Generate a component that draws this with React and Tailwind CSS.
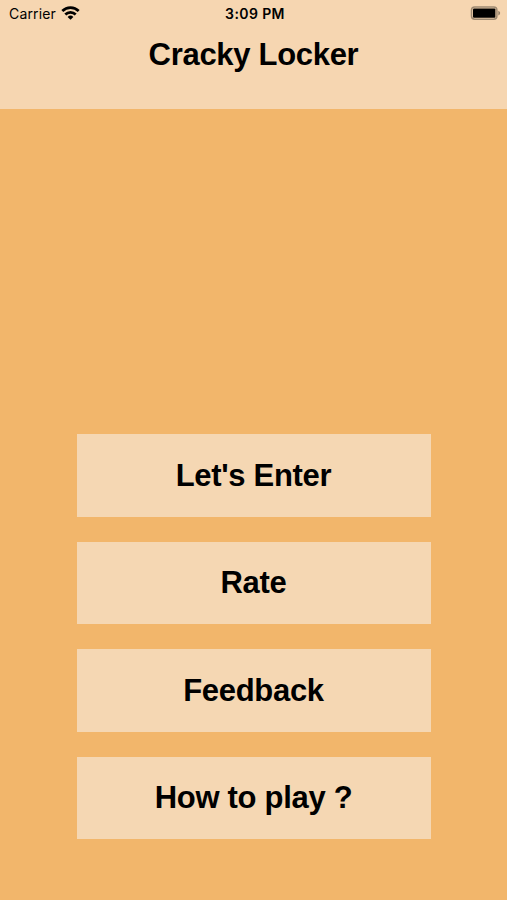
import React from 'react';

const menuItems = [
  { id: 'enter', label: "Let's Enter" },
  { id: 'rate', label: 'Rate' },
  { id: 'feedback', label: 'Feedback' },
  { id: 'help', label: 'How to play ?' }
];

const WifiIcon = () => (
  <svg className="w-[19px] h-[14px] -mt-px" viewBox="0 0 19 14" fill="none" stroke="#000" strokeWidth="2.7">
    <path d="M1.3 5a11.6 11.6 0 0 1 16.4 0" />
    <path d="M4.3 8.5a7.4 7.4 0 0 1 10.4 0" />
    <path d="M9.5 13.8 6.6 10.9a4.1 4.1 0 0 1 5.8 0z" fill="#000" stroke="none" />
  </svg>
);

const BatteryIcon = () => (
  <svg className="w-[31px] h-[14px] -mt-px" viewBox="0 0 31 14" fill="none">
    <rect x="1.5" y="1" width="25.4" height="12.2" rx="3.2" stroke="#000" strokeOpacity="0.36" strokeWidth="1.5" />
    <rect x="3" y="2.4" width="22.4" height="9.4" rx="1" fill="#000" />
    <path d="M28.3 4.8v4.6c2.4-.8 2.4-3.8 0-4.6z" fill="#000" fillOpacity="0.4" />
  </svg>
);

const StatusBar = () => (
  <div className="grid grid-cols-3 items-center h-[27px] pl-[9px] pr-[6px] text-[14px]">
    <div className="flex items-center gap-[5px]">
      <span className="tracking-[0.15px]">Carrier</span>
      <WifiIcon />
    </div>
    <span className="text-center font-semibold tracking-[0.4px]">3:09 PM</span>
    <div className="flex justify-end">
      <BatteryIcon />
    </div>
  </div>
);

const App = () => {
  return (
    <div className="flex flex-col h-screen bg-[#f2b66b] text-black font-['Inter',sans-serif]">
      <header className="h-[109px] bg-[#f6d6b1]">
        <StatusBar />
        <h1 className="mt-[8px] text-center text-[31px] leading-[40px] font-bold tracking-[-0.3px] font-['Liberation_Sans',sans-serif]">
          Cracky Locker
        </h1>
      </header>

      <nav className="mt-[325px] mx-auto w-[354px] flex flex-col gap-[25px]">
        {menuItems.map((item) => (
          <button
            key={item.id}
            className="h-[82.5px] pt-px bg-[#f5d7b3] text-[31px] font-bold tracking-[-0.3px] font-['Liberation_Sans',sans-serif]"
          >
            {item.label}
          </button>
        ))}
      </nav>
    </div>
  );
};

export default App;
